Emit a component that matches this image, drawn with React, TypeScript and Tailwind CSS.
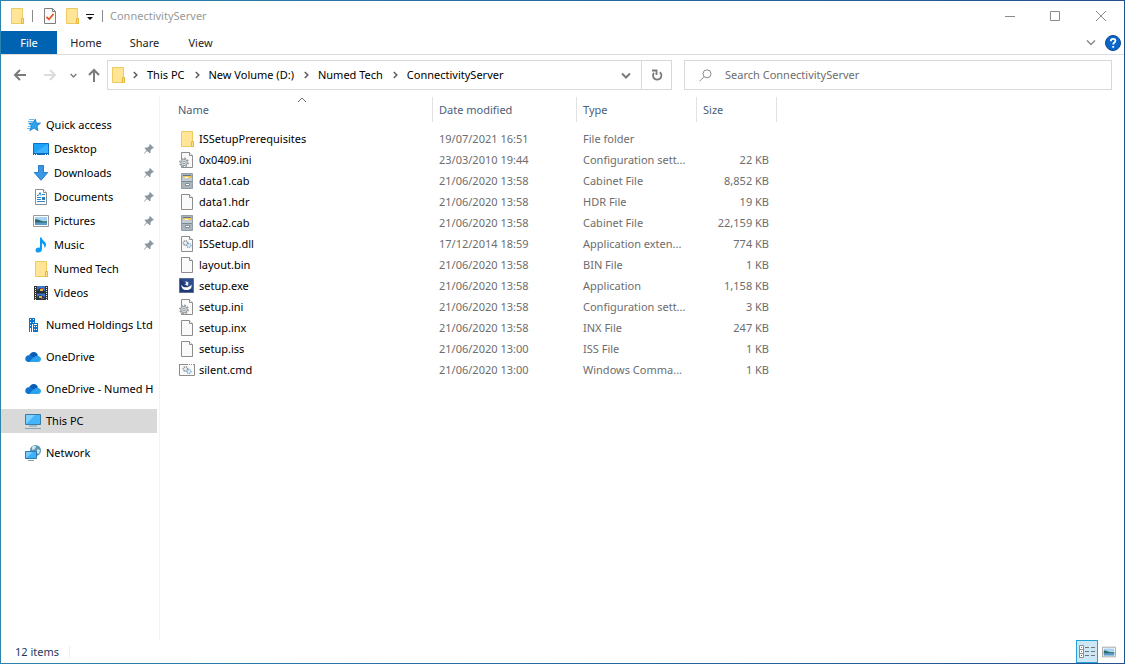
import type { ReactNode } from 'react';

type IconProps = { className?: string };

function FolderIcon({ className = 'w-4 h-4' }: IconProps) {
  return (
    <svg viewBox="0 0 16 16" className={className} aria-hidden="true">
      <path d="M2.500.5h11v10h1v5h-12z" fill="#ffe595" stroke="#edcb63" />
      <path d="M12.500 15.500v-5h2v5z" fill="#ffe08a" stroke="#e6b93c" />
    </svg>
  );
}

function PropertiesIcon() {
  return (
    <svg viewBox="0 0 14 16" className="w-3.5 h-4" aria-hidden="true">
      <path d="M1.500.5h8l3 3v12h-11z" fill="#fafafa" stroke="#7f7f7f" />
      <path d="M9.500.5v3h3" fill="none" stroke="#7f7f7f" />
      <path d="M3.500 9l2.500 2.300L10.500 6" fill="none" stroke="#e8541e" strokeWidth="1.800" />
    </svg>
  );
}

function StarIcon() {
  return (
    <svg viewBox="0 0 16 16" className="w-4 h-4" aria-hidden="true">
      <path d="M10.300 2.200l1 3.800 4.200.2-3.500 2.600.9 4.900-3.800-2.700-4.200 2.600 1.600-4.600L3.800 6.200l3.900-.1z" fill="#2ba5f0" stroke="#1c7fcb" strokeWidth=".9" />
      <path d="M4 2.500h5M3 4.500h5M3 9.500h3M2 11.500h3" stroke="#63bdf0" />
    </svg>
  );
}

function DesktopIcon() {
  return (
    <svg viewBox="0 0 16 16" className="w-4 h-4" aria-hidden="true">
      <path d="M.5 2.500h15v11H.5z" fill="#1ba1f8" stroke="#0b71c4" />
      <path d="M1 12L15 3v9z" fill="#3cb2ff" />
      <path d="M0 13h16" stroke="#0a6cc0" strokeWidth="2" />
      <path d="M1 13.500h1M3 13.500h1M12 13.500h1M14 13.500h1" stroke="#fff" />
    </svg>
  );
}

function DownloadIcon() {
  return (
    <svg viewBox="0 0 16 16" className="w-4 h-4" aria-hidden="true">
      <path d="M5.500.5h5v7h4.300L8 15.300 1.200 7.500h4.300z" fill="#3a97e4" stroke="#2b7ec9" />
    </svg>
  );
}

function DocumentIcon() {
  return (
    <svg viewBox="0 0 16 16" className="w-4 h-4" aria-hidden="true">
      <path d="M2.500.5h8l3 3v12h-11z" fill="#fff" stroke="#868e96" />
      <path d="M10.500.5v3h3" fill="#fff" stroke="#868e96" />
      <path d="M4 6.500h1.500l1.500-3 1 3M9 5.500h3M4 8.500h4M4 10.500h4M4 12.500h8" stroke="#2787cf" fill="none" />
      <path d="M9 8h3v3H9z" fill="#297fb5" />
    </svg>
  );
}

function PictureIcon({ className = 'w-4 h-4' }: IconProps) {
  return (
    <svg viewBox="0 0 16 16" className={className} aria-hidden="true">
      <path d="M.5 2.500h15v11H.5z" fill="#fff" stroke="#9b9b9b" />
      <path d="M2 4h12v8H2z" fill="#a7d3f5" />
      <path d="M2 6.500c3-1 4 1 7 1.500s3 .5 5 0V10H2z" fill="#2d6b66" />
      <path d="M2 9.500h12V12H2z" fill="#5c9bcd" />
    </svg>
  );
}

function MusicIcon() {
  return (
    <svg viewBox="0 0 16 16" className="w-4 h-4" aria-hidden="true">
      <path d="M7 .5h1.500c.3 3 5 4 4.500 7.500-.2 1.500-1 2.500-1.800 3 .6-2.500-.6-4.300-2.200-4.700V12c0 4.500-6.500 4.500-6.500 1.200C2.500 11 5 10 7 10.700z" fill="#0a9bf5" />
    </svg>
  );
}

function VideoIcon() {
  return (
    <svg viewBox="0 0 16 16" className="w-4 h-4" aria-hidden="true">
      <path d="M1 1h14v14H1z" fill="#333" />
      <path d="M4 1h8v14H4z" fill="#3e77cf" />
      <path d="M4 5l3-2 5 3v2H4zM4 12l3-2 5 2v3H4z" fill="#20364c" />
      <path d="M7 4h3v2H7zM6 11h3v2H6z" fill="#e8b23c" />
      <path d="M9 3h2v1H9zM8 13h3v1H8z" fill="#c33d27" />
      <path d="M2.500 2v13M13.500 2v13" stroke="#eee" strokeDasharray="1 1" />
      <path d="M4 8h8" stroke="#222" />
    </svg>
  );
}

function BuildingIcon() {
  return (
    <svg viewBox="0 0 16 16" className="w-4 h-4" aria-hidden="true">
      <path d="M4 1h6v5h3v9H4z" fill="#0a74d1" />
      <path d="M5 2h1v1H5zM8 2h1v1H8zM5 5h1v1H5zM8 5h1v1H8zM5 8h1v1H5zM5 11h1v4H5zM7 7h1v8H7zM9 7h3v1H9zM9 9h1v1H9zM11 9h1v1h-1zM9 12h1v1H9zM11 12h1v1h-1z" fill="#fff" />
    </svg>
  );
}

function CloudIcon() {
  return (
    <svg viewBox="0 0 16 16" className="w-4 h-4" aria-hidden="true">
      <path d="M4 7.500C4.500 2.500 11.500 1.200 13 6.500L9 9z" fill="#0a5cb4" />
      <path d="M3.600 13C-1 12.500-.8 6.500 4 6.300c2-.2 3.500 1 5.500 2.200L13 13z" fill="#0f72ce" />
      <path d="M8 9l3-2c2-1 5 .5 5 3 0 2-1.500 3-3 3H4z" fill="#2aa3ea" />
    </svg>
  );
}

function ComputerIcon() {
  return (
    <svg viewBox="0 0 16 16" className="w-4 h-4" aria-hidden="true">
      <path d="M.5 1.500h15v10H.5z" fill="#43b5fa" stroke="#3b7ba5" />
      <path d="M1 11V2h9z" fill="#7fd0ff" />
      <path d="M4 13h8" stroke="#7e9db5" />
      <path d="M0 15.500h16" stroke="#8aa2b8" />
    </svg>
  );
}

function NetworkIcon() {
  return (
    <svg viewBox="0 0 16 16" className="w-4 h-4" aria-hidden="true">
      <circle cx="10.500" cy="5.500" r="5.500" fill="#5f93b4" />
      <path d="M7 2c2-2 4-1 4 0s-2 3-4 3zM12 4l3 1-1 4-2-1z" fill="#c6e4ef" />
      <path d="M.5 6.500h11v7H.5z" fill="#3db0f7" stroke="#2f79ab" />
      <path d="M1 13V7h7z" fill="#78ccff" />
      <path d="M3 15.500h6" stroke="#7e9db5" />
    </svg>
  );
}

function PinIcon() {
  return (
    <svg viewBox="0 0 12 12" className="w-3 h-3" aria-hidden="true">
      <path d="M7 1l4 4-1.200.6-.6-.2-1.700 2 .1 2.100-1 .7-2.300-2.300L1 11l-.2-.4 2.700-3.200L1.500 5.300l.8-.9 2.300.1 1.900-1.700-.2-1z" fill="#8c979f" />
    </svg>
  );
}

function Page({ children }: { children?: ReactNode }) {
  return (
    <svg viewBox="0 0 16 16" className="w-4 h-4" aria-hidden="true">
      <path d="M2.500.5h8l3 3v12h-11z" fill="#fafafa" stroke="#8d8d8d" />
      <path d="M10.500.5v3h3" fill="#fff" stroke="#8d8d8d" />
      {children}
    </svg>
  );
}

function ConfigIcon() {
  return (
    <Page>
      <circle cx="5" cy="10.500" r="4" fill="#dfe3e6" stroke="#8f979c" strokeWidth="1.800" strokeDasharray="1.600 1.500" />
      <circle cx="5" cy="10.500" r="3.200" fill="#d5dade" stroke="#9aa1a6" />
      <circle cx="5" cy="10.500" r="1.200" fill="#fff" stroke="#8f979c" />
    </Page>
  );
}

function Gears() {
  return (
    <>
      <circle cx="6.500" cy="7" r="2.200" fill="#eee" stroke="#8b9298" strokeWidth="1.500" strokeDasharray="1.200 .7" />
      <circle cx="10" cy="9.500" r="2" fill="#e0f1fb" stroke="#7fb0cf" strokeWidth="1.300" strokeDasharray="1.200 .6" />
    </>
  );
}

function CabinetIcon() {
  return (
    <svg viewBox="0 0 16 16" className="w-4 h-4" aria-hidden="true">
      <path d="M2.500.5h11v15h-11z" fill="#a9b4bc" stroke="#929da6" />
      <path d="M4 2h8v1H4z" fill="#66747f" />
      <path d="M4 3h8v2H4z" fill="#f3cb5b" />
      <path d="M3 5h10v3H3z" fill="#c3ccd2" />
      <path d="M3 8h10v1H3z" fill="#7b8993" />
      <path d="M6 4h3v1H6z" fill="#fff" />
      <path d="M6.500 10.500h4v2h-4z" fill="#fff" stroke="#84919b" />
    </svg>
  );
}

function SetupIcon() {
  return (
    <svg viewBox="0 0 16 16" className="w-4 h-4" aria-hidden="true">
      <path d="M.5.5h14v14H.5z" fill="#1f3a75" stroke="#5b6c95" />
      <path d="M1 1l13 12V1z" fill="#2d4c8c" />
      <path d="M2.500 6.500c1 4 8 3.500 10 0 .5 4-1.500 5.500-5 5.500s-5.500-2-5-5.500z" fill="#fff" />
      <path d="M6.500 3l3 1.500-.5 3.500-3.500-1.500 1.500-.7z" fill="#e9effa" />
    </svg>
  );
}

function CommandIcon() {
  return (
    <svg viewBox="0 0 16 16" className="w-4 h-4" aria-hidden="true">
      <path d="M.5 2.500h15v11H.5z" fill="#fafafa" stroke="#8d8d8d" />
      <path d="M0 2.500h16" stroke="#8d8d8d" />
      <path d="M9 2.500h1M11 2.500h1M13 2.500h1" stroke="#fff" />
      <Gears />
    </svg>
  );
}

function Chevron({ className, d = 'M1 1.500l4 4 4-4', width = 1.5 }: IconProps & { d?: string; width?: number }) {
  return (
    <svg viewBox="0 0 10 7" className={className} fill="none" stroke="currentColor" strokeWidth={width} aria-hidden="true">
      <path d={d} />
    </svg>
  );
}

function CrumbArrow() {
  return (
    <svg viewBox="0 0 5 8" className="w-[5px] h-2 text-[#5c5c5c]" fill="none" stroke="currentColor" strokeWidth="1.500" aria-hidden="true">
      <path d="M.8 1l3 3-3 3" />
    </svg>
  );
}

function Arrow({ className, d }: { className: string; d: string }) {
  return (
    <svg viewBox="0 0 14 14" className={className} fill="none" stroke="currentColor" strokeWidth="2" aria-hidden="true">
      <path d={d} />
    </svg>
  );
}

type NavItem = { label: string; icon: ReactNode; pinned?: boolean; selected?: boolean };

const quickAccess: NavItem[] = [
  { label: 'Desktop', icon: <DesktopIcon />, pinned: true },
  { label: 'Downloads', icon: <DownloadIcon />, pinned: true },
  { label: 'Documents', icon: <DocumentIcon />, pinned: true },
  { label: 'Pictures', icon: <PictureIcon />, pinned: true },
  { label: 'Music', icon: <MusicIcon />, pinned: true },
  { label: 'Numed Tech', icon: <FolderIcon /> },
  { label: 'Videos', icon: <VideoIcon /> },
];

const places: NavItem[] = [
  { label: 'Numed Holdings Ltd', icon: <BuildingIcon /> },
  { label: 'OneDrive', icon: <CloudIcon /> },
  { label: 'OneDrive - Numed H', icon: <CloudIcon /> },
  { label: 'This PC', icon: <ComputerIcon />, selected: true },
  { label: 'Network', icon: <NetworkIcon /> },
];

const crumbs = ['This PC', 'New Volume (D:)', 'Numed Tech', 'ConnectivityServer'];

const files = [
  { name: 'ISSetupPrerequisites', date: '19/07/2021 16:51', type: 'File folder', size: '', icon: <FolderIcon /> },
  { name: '0x0409.ini', date: '23/03/2010 19:44', type: 'Configuration sett...', size: '22 KB', icon: <ConfigIcon /> },
  { name: 'data1.cab', date: '21/06/2020 13:58', type: 'Cabinet File', size: '8,852 KB', icon: <CabinetIcon /> },
  { name: 'data1.hdr', date: '21/06/2020 13:58', type: 'HDR File', size: '19 KB', icon: <Page /> },
  { name: 'data2.cab', date: '21/06/2020 13:58', type: 'Cabinet File', size: '22,159 KB', icon: <CabinetIcon /> },
  { name: 'ISSetup.dll', date: '17/12/2014 18:59', type: 'Application exten...', size: '774 KB', icon: <Page><Gears /></Page> },
  { name: 'layout.bin', date: '21/06/2020 13:58', type: 'BIN File', size: '1 KB', icon: <Page /> },
  { name: 'setup.exe', date: '21/06/2020 13:58', type: 'Application', size: '1,158 KB', icon: <SetupIcon /> },
  { name: 'setup.ini', date: '21/06/2020 13:58', type: 'Configuration sett...', size: '3 KB', icon: <ConfigIcon /> },
  { name: 'setup.inx', date: '21/06/2020 13:58', type: 'INX File', size: '247 KB', icon: <Page /> },
  { name: 'setup.iss', date: '21/06/2020 13:00', type: 'ISS File', size: '1 KB', icon: <Page /> },
  { name: 'silent.cmd', date: '21/06/2020 13:00', type: 'Windows Comma...', size: '1 KB', icon: <CommandIcon /> },
];

function TitleBar() {
  return (
    <header className="flex h-[30px] items-center pl-2">
      <FolderIcon />
      <span className="ml-[7px] mr-2.5 h-3 w-px bg-[#8a8a8a]" />
      <button aria-label="Properties"><PropertiesIcon /></button>
      <button aria-label="New folder" className="ml-[7px]"><FolderIcon /></button>
      <button aria-label="Customize Quick Access Toolbar" className="ml-1.5 mt-0.5">
        <svg viewBox="0 0 8 6" className="w-2 h-1.5" aria-hidden="true">
          <path d="M0 0h8v1H0zM1 3h6L4 6z" fill="#111" />
        </svg>
      </button>
      <span className="ml-2 mr-[7px] h-3 w-px bg-[#8a8a8a]" />
      <h1 className="text-[#999]">ConnectivityServer</h1>
      <div className="ml-auto flex h-full text-[#8a8a8a]">
        <button aria-label="Minimize" className="flex w-[45px] items-center justify-center">
          <svg viewBox="0 0 10 10" className="size-2.5" stroke="currentColor" aria-hidden="true"><path d="M0 5.500h10" /></svg>
        </button>
        <button aria-label="Maximize" className="flex w-[45px] items-center justify-center">
          <svg viewBox="0 0 10 10" className="size-2.5" fill="none" stroke="currentColor" aria-hidden="true"><path d="M.5.5h9v9h-9z" /></svg>
        </button>
        <button aria-label="Close" className="ml-px flex w-[46px] items-center justify-center">
          <svg viewBox="0 0 10 10" className="size-2.5" stroke="currentColor" aria-hidden="true"><path d="M0 0l10 10M10 0L0 10" /></svg>
        </button>
      </div>
    </header>
  );
}

function Ribbon() {
  return (
    <nav className="flex h-6 border-b border-[#dadbdc] text-[#222]">
      <button className="w-14 bg-[#0063b1] text-white">File</button>
      <button className="w-[58px]">Home</button>
      <button className="w-[59px]">Share</button>
      <button className="w-[53px]">View</button>
      <button aria-label="Expand the Ribbon" className="ml-auto mr-[9px] text-[#8a8a8a]">
        <Chevron className="h-[7px] w-2.5" />
      </button>
      <button aria-label="Help" className="mr-[3px]">
        <svg viewBox="0 0 16 16" className="size-4" aria-hidden="true">
          <circle cx="8" cy="8" r="7.500" fill="#0a66c9" stroke="#0b4a91" />
          <path d="M5.800 6.200c0-3 4.600-3 4.600-.4 0 1.700-2.200 1.700-2.200 3.700M8.200 11v1.800" fill="none" stroke="#fff" strokeWidth="1.800" />
        </svg>
      </button>
    </nav>
  );
}

function AddressBar() {
  return (
    <div className="flex items-center pb-[7px] pl-3 pr-3 pt-[5px]">
      <div className="flex w-[94px] shrink-0 items-center text-[#7a7a7a]">
        <button aria-label="Back"><Arrow className="size-3.5" d="M13 7H2M7 2L2 7l5 5" /></button>
        <button aria-label="Forward" className="ml-4 text-[#dcdcdc]"><Arrow className="size-3.5" d="M1 7h11M7 2l5 5-5 5" /></button>
        <button aria-label="Recent locations" className="ml-[13px]"><Chevron className="h-[5px] w-[7px]" width={2} /></button>
        <button aria-label="Up" className="ml-2.5"><Arrow className="size-3.5" d="M7 14V2M2 7l5-5 5 5" /></button>
      </div>
      <div className="flex h-[30px] min-w-0 flex-[563] items-center border border-[#d9d9d9]">
        <span className="ml-0.5 mr-[7px]"><FolderIcon /></span>
        <ol className="flex min-w-0 flex-1 items-center whitespace-nowrap">
          {crumbs.map((crumb) => (
            <li key={crumb} className="flex items-center">
              <CrumbArrow />
              <a href="#" className="pl-[9px] pr-2.5">{crumb}</a>
            </li>
          ))}
        </ol>
        <button aria-label="Previous locations" className="mr-2.5 text-[#7a7a7a]"><Chevron className="h-[7px] w-2.5" width={2} /></button>
        <button aria-label="Refresh" className="flex h-full w-[30px] items-center justify-center border-l border-[#d9d9d9] text-[#7a7a7a]">
          <svg viewBox="0 0 12 12" className="size-3" fill="none" stroke="currentColor" strokeWidth="1.800" aria-hidden="true">
            <path d="M8.800 3.200A4.200 4.200 0 1 1 3 3.800M1 1.500h4.500V6" />
          </svg>
        </button>
      </div>
      <label className="ml-3 flex h-[30px] min-w-0 flex-[412] items-center border border-[#d9d9d9] pl-3.5">
        <svg viewBox="0 0 13 13" className="size-[13px] shrink-0" fill="none" stroke="#8a8a8a" aria-hidden="true">
          <circle cx="8" cy="4.800" r="4" /><path d="M5 7.800L.5 12.300" />
        </svg>
        <input type="search" aria-label="Search ConnectivityServer" placeholder="Search ConnectivityServer" className="ml-[13px] min-w-0 flex-1 outline-none placeholder:text-[#6d6d6d]" />
      </label>
    </div>
  );
}

function Sidebar() {
  return (
    <nav className="w-[159px] shrink-0 whitespace-nowrap border-r border-[#f3f3f3] pr-0.5 pt-4">
      <a href="#" className="flex h-6 items-center gap-[5px] pl-6"><StarIcon />Quick access</a>
      <ul>
        {quickAccess.map((item) => (
          <li key={item.label}>
            <a href="#" className="flex h-6 items-center gap-[5px] pl-8 pr-0.5">
              {item.icon}
              <span className="flex-1">{item.label}</span>
              {item.pinned && <PinIcon />}
            </a>
          </li>
        ))}
      </ul>
      <ul className="flex flex-col gap-2 pt-2">
        {places.map((item) => (
          <li key={item.label}>
            <a href="#" className={`flex h-6 items-center gap-[5px] pl-6 ${item.selected ? 'bg-[#d9d9d9]' : ''}`}>
              {item.icon}
              {item.label}
            </a>
          </li>
        ))}
      </ul>
    </nav>
  );
}

function FileTable() {
  return (
    <table className="ml-3 w-[605px] table-fixed border-separate border-spacing-0 self-start whitespace-nowrap text-left">
      <thead className="text-[#4c607a]">
        <tr className="h-[25px]">
          <th className="relative w-[261px] border-r border-[#e2e2e2] pl-1.5 font-normal">
            Name
            <Chevron className="absolute inset-x-0 top-0 mx-auto h-[7px] w-2.5 text-[#6a6a6a]" d="M1 5l4-4 4 4" width={1} />
          </th>
          <th className="w-[144px] border-r border-[#e2e2e2] pl-1.5 font-normal">Date modified</th>
          <th className="w-[120px] border-r border-[#e2e2e2] pl-1.5 font-normal">Type</th>
          <th className="w-20 border-r border-[#e2e2e2] pl-1.5 font-normal">Size</th>
        </tr>
      </thead>
      <tbody className="text-[#6d6d6d] before:block before:h-1.5">
        {files.map((file) => (
          <tr key={file.name} className="h-[21px]">
            <td className="pl-[7px] text-black">
              <span className="flex items-center gap-1">{file.icon}{file.name}</span>
            </td>
            <td className="pl-1.5">{file.date}</td>
            <td className="pl-1.5">{file.type}</td>
            <td className="pr-2 text-right">{file.size}</td>
          </tr>
        ))}
      </tbody>
    </table>
  );
}

function StatusBar() {
  return (
    <footer className="flex h-[23px] items-center pl-3.5 text-[#1e395b]">
      <span className="w-[54px]">12 items</span>
      <span className="h-3 w-px bg-[#eee]" />
      <button aria-label="Details view" className="ml-auto flex h-full w-[22px] items-center justify-center border border-[#26a0da] bg-[#cce8f6]">
        <svg viewBox="0 0 17 13" className="h-[13px] w-[17px] shrink-0" fill="none" stroke="#8c8c8c" aria-hidden="true">
          <path d="M.5.5h4v12h-4zM.5 4.500h4M.5 8.500h4" fill="#fff" />
          <path d="M6 2.500h4M12 2.500h4M6 6.500h4M12 6.500h4M6 10.500h4M12 10.500h4" stroke="#777" />
          <path d="M2 2.500h1M2 6.500h1" stroke="#3f82b5" /><path d="M2 10.500h1" stroke="#c22" />
        </svg>
      </button>
      <button aria-label="Large icons view" className="ml-1 mr-2"><PictureIcon className="size-3.5" /></button>
    </footer>
  );
}

export default function App() {
  return (
    <div className="flex min-h-screen bg-linear-to-r from-[#2a84ab] to-[#23508f] p-px font-['Noto_Sans','Open_Sans',sans-serif] text-[11px] leading-4 text-black">
      <div className="flex min-w-0 flex-1 flex-col bg-white">
        <TitleBar />
        <Ribbon />
        <AddressBar />
        <main className="flex flex-1">
          <Sidebar />
          <FileTable />
        </main>
        <StatusBar />
      </div>
    </div>
  );
}
